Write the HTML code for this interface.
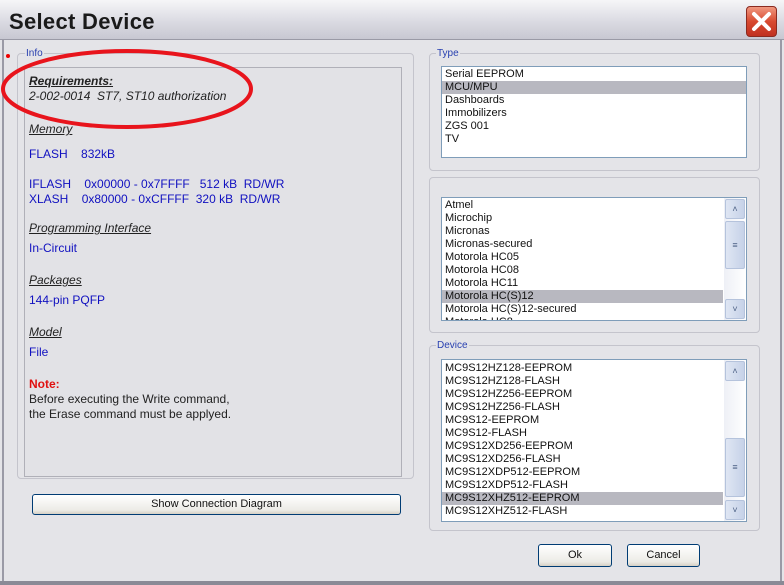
<!DOCTYPE html>
<html><head><style>
*{margin:0;padding:0;box-sizing:border-box}
body{width:784px;height:585px;overflow:hidden;background:#e4e4e8;font-family:"Liberation Sans",Arial,sans-serif;position:relative}
.a{position:absolute}
.title{left:0;top:0;width:784px;height:40px;background:linear-gradient(#f6f6f8,#d8d8e0 60%,#c8c8d2);border-bottom:1px solid #9a9aa6}
.tt{left:9px;top:9px;font-size:22px;font-weight:bold;color:#1a1a1a;letter-spacing:0.3px}
.close{left:746px;top:6px;width:31px;height:31px;border:1px solid #8a2a20;border-radius:4px;background:linear-gradient(#f09880,#d84a30 50%,#c03020)}
.grp{border:1px solid #c4c4cc;border-radius:4px}
.lbl{font-size:10px;color:#2840b0;background:#e4e4e8;padding:0 1px}
.list{background:#fff;border:1px solid #7f9db9;font-size:11px;color:#111;line-height:13px}
.list div{padding-left:3px;height:13px;white-space:nowrap}
.sel{background:#b8b8c0}
.info{font-size:12px;line-height:15px;color:#1010c0;white-space:pre}
.h{color:#222;font-style:italic;text-decoration:underline}
.btn{border:1px solid #003c74;border-radius:3px;background:linear-gradient(#fff,#ecebe6 80%,#d6d0c5);font-size:11px;text-align:center;color:#111}
.sb{background:linear-gradient(90deg,#eef0f6,#fff)}
.sbb{border:1px solid #b5c3dc;border-radius:2px;background:linear-gradient(90deg,#dfe6f3,#c6d2e8);font-size:9px;text-align:center;color:#4d6185}
</style></head><body>
<div class="a title"></div>
<div class="a tt">Select Device</div>
<div class="a close"><svg width="29" height="29"><path d="M7 7L22 22M22 7L7 22" stroke="#fff" stroke-width="4" stroke-linecap="round"/></svg></div>
<div class="a" style="left:2px;top:40px;width:2px;height:545px;background:#9a9aa6"></div>
<div class="a" style="left:780px;top:40px;width:2px;height:545px;background:#9a9aa6"></div>
<div class="a" style="left:0;top:581px;width:784px;height:4px;background:#8a8a96"></div>

<div class="a grp" style="left:17px;top:53px;width:397px;height:426px"></div>
<div class="a lbl" style="left:25px;top:48px">Info</div>
<div class="a" style="left:6px;top:54px;width:4px;height:4px;border-radius:2px;background:#e00"></div>
<div class="a" style="left:24px;top:67px;width:378px;height:410px;border:1px solid #b0b0b8;background:#e2e2e6"></div>
<div class="a info" style="left:29px;top:74px"><span class="h" style="font-weight:bold">Requirements:</span>
<span style="color:#222;font-style:italic">2-002-0014  ST7, ST10 authorization</span></div>
<div class="a info" style="left:29px;top:122px"><span class="h">Memory</span></div>
<div class="a info" style="left:29px;top:147px">FLASH    832kB</div>
<div class="a info" style="left:29px;top:177px">IFLASH    0x00000 - 0x7FFFF   512 kB  RD/WR
XLASH    0x80000 - 0xCFFFF  320 kB  RD/WR</div>
<div class="a info" style="left:29px;top:221px"><span class="h">Programming Interface</span></div>
<div class="a info" style="left:29px;top:241px">In-Circuit</div>
<div class="a info" style="left:29px;top:273px"><span class="h">Packages</span></div>
<div class="a info" style="left:29px;top:293px">144-pin PQFP</div>
<div class="a info" style="left:29px;top:325px"><span class="h">Model</span></div>
<div class="a info" style="left:29px;top:345px">File</div>
<div class="a info" style="left:29px;top:377px;color:#222"><b style="color:#e01010">Note:</b>
Before executing the Write command,
the Erase command must be applyed.</div>
<svg class="a" style="left:0;top:45px" width="260" height="90"><ellipse cx="127" cy="44" rx="124" ry="38" fill="none" stroke="#e8141c" stroke-width="4"/></svg>
<div class="a btn" style="left:32px;top:494px;width:369px;height:21px;line-height:19px">Show Connection Diagram</div>

<div class="a grp" style="left:429px;top:53px;width:331px;height:118px"></div>
<div class="a lbl" style="left:436px;top:48px">Type</div>
<div class="a list" style="left:441px;top:66px;width:306px;height:92px;padding-top:1px">
<div>Serial EEPROM</div><div class="sel">MCU/MPU</div><div>Dashboards</div><div>Immobilizers</div><div>ZGS 001</div><div>TV</div></div>

<div class="a grp" style="left:429px;top:177px;width:331px;height:156px"></div>
<div class="a list" style="left:441px;top:197px;width:306px;height:124px;overflow:hidden;padding-top:1px">
<div>Atmel</div><div>Microchip</div><div>Micronas</div><div>Micronas-secured</div><div>Motorola HC05</div><div>Motorola HC08</div><div>Motorola HC11</div><div class="sel" style="width:281px">Motorola HC(S)12</div><div>Motorola HC(S)12-secured</div><div>Motorola HC8</div></div>
<div class="a sb" style="left:724px;top:198px;width:22px;height:122px"></div>
<div class="a sbb" style="left:725px;top:199px;width:20px;height:20px;line-height:18px">&#708;</div>
<div class="a sbb" style="left:725px;top:221px;width:20px;height:48px;line-height:46px">&#8801;</div>
<div class="a sbb" style="left:725px;top:299px;width:20px;height:20px;line-height:18px">&#709;</div>

<div class="a grp" style="left:429px;top:345px;width:331px;height:186px"></div>
<div class="a lbl" style="left:436px;top:340px">Device</div>
<div class="a list" style="left:441px;top:359px;width:306px;height:163px;padding-top:2px">
<div>MC9S12HZ128-EEPROM</div><div>MC9S12HZ128-FLASH</div><div>MC9S12HZ256-EEPROM</div><div>MC9S12HZ256-FLASH</div><div>MC9S12-EEPROM</div><div>MC9S12-FLASH</div><div>MC9S12XD256-EEPROM</div><div>MC9S12XD256-FLASH</div><div>MC9S12XDP512-EEPROM</div><div>MC9S12XDP512-FLASH</div><div class="sel" style="width:281px">MC9S12XHZ512-EEPROM</div><div>MC9S12XHZ512-FLASH</div></div>
<div class="a sb" style="left:724px;top:360px;width:22px;height:161px"></div>
<div class="a sbb" style="left:725px;top:361px;width:20px;height:20px;line-height:18px">&#708;</div>
<div class="a sbb" style="left:725px;top:438px;width:20px;height:59px;line-height:57px">&#8801;</div>
<div class="a sbb" style="left:725px;top:500px;width:20px;height:20px;line-height:18px">&#709;</div>

<div class="a btn" style="left:538px;top:544px;width:74px;height:23px;line-height:21px">Ok</div>
<div class="a btn" style="left:627px;top:544px;width:73px;height:23px;line-height:21px">Cancel</div>
</body></html>
